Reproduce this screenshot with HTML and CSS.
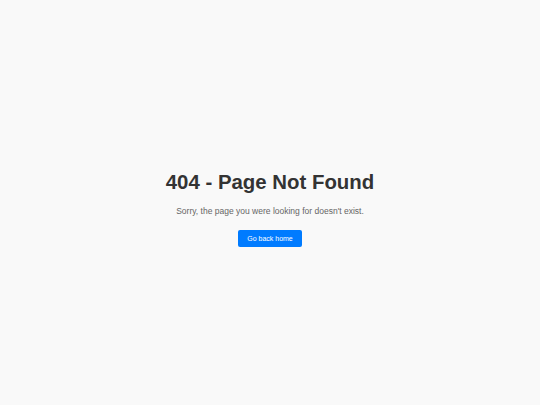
FILE: index.html
```html
<!DOCTYPE html>
<html>
<head>
<meta charset="utf-8">
<link rel="stylesheet" href="styles.css">
</head>
<body>
<div class="page">
  <div class="content">
    <h1 class="title">404 - Page Not Found</h1>
    <p class="message">Sorry, the page you were looking for doesn't exist.</p>
    <a class="home-btn" href="#">Go back home</a>
  </div>
</div>
</body>
</html>
```
FILE: styles.css
```css
html, body {
  margin: 0;
  padding: 0;
}
body {
  background: #f9f9f9;
  font-family: "Liberation Sans", Arial, sans-serif;
}
.page {
  height: 405px;
  display: flex;
  align-items: center;
  justify-content: center;
}
.content {
  text-align: center;
  display: flex;
  flex-direction: column;
  align-items: center;
  margin-top: 12px;
}
.title {
  margin: 0;
  font-size: 20.4px;
  font-weight: bold;
  color: #333;
  line-height: 24px;
}
.message {
  margin: 11px 0 0;
  font-size: 8.5px;
  color: #666;
  line-height: 12px;
}
.home-btn {
  margin-top: 13px;
  display: inline-block;
  background: #007bff;
  color: #fff;
  text-decoration: none;
  font-size: 7px;
  line-height: 17px;
  width: 64px;
  border-radius: 2px;
}
```
